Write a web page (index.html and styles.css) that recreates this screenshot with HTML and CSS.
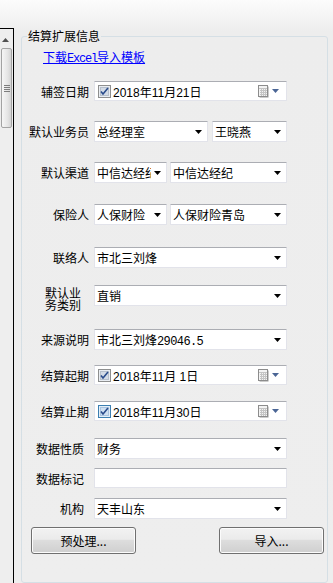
FILE: index.html
```html
<!DOCTYPE html>
<html lang="zh-CN">
<head>
  <meta charset="UTF-8" />
  <title>结算扩展信息</title>
  <link rel="stylesheet" href="styles.css">
</head>
<body>
  <div class="window">
    <aside class="side">
      <div class="side-up"><svg width="7" height="4" viewBox="0 0 7 4"><path d="M3.5 0L7 4H0z" fill="#505050"/></svg></div>
      <div class="side-thumb"><span class="grip"></span></div>
    </aside>

    <fieldset class="group">
      <legend>结算扩展信息</legend>
      <a class="tpl-link" href="#">下载<span class="ascii">Excel</span>导入模板</a>

      <div class="form">
        <label class="lbl">辅签日期</label>
        <div class="field date">
          <span class="chk"><svg width="13" height="13" viewBox="0 0 13 13"><rect x="0.5" y="0.5" width="12" height="12" fill="#e9edf2" stroke="#8e8f8f"/><rect x="2.5" y="2.5" width="8" height="8" fill="#d3dbe6" stroke="#b7c0cc"/><path d="M3 6.5l2 2.5 5-6" fill="none" stroke="#2a4c8c" stroke-width="1.6"/></svg></span>
          <span class="val">2018年11月21日</span>
          <span class="cal"><svg width="11" height="13" viewBox="0 0 11 13"><rect x="1.5" y="1.5" width="9" height="11" fill="#9a9a9a"/><rect x="0.5" y="0.5" width="9" height="11" fill="#f3f3f3" stroke="#8c8c8c"/><path d="M1 3.5h8M2 5.5h7M2 7.5h7M2 9.5h7M3.5 4v7M5.5 4v7M7.5 4v7" stroke="#c4c4c4"/></svg></span>
          <span class="cal-arrow"><svg width="7" height="4" viewBox="0 0 7 4"><path d="M0 0h7L3.5 4z" fill="#4a6595"/></svg></span>
        </div>

        <label class="lbl">默认业务员</label>
        <div class="pair pair-a">
          <div class="field combo"><span class="val">总经理室</span><span class="arrow"><svg width="7" height="4" viewBox="0 0 7 4"><path d="M0 0h7L3.5 4z" fill="#000"/></svg></span></div>
          <div class="field combo"><span class="val">王晓燕</span><span class="arrow"><svg width="7" height="4" viewBox="0 0 7 4"><path d="M0 0h7L3.5 4z" fill="#000"/></svg></span></div>
        </div>

        <label class="lbl">默认渠道</label>
        <div class="pair pair-b">
          <div class="field combo"><span class="val">中信达经纪</span><span class="arrow"><svg width="7" height="4" viewBox="0 0 7 4"><path d="M0 0h7L3.5 4z" fill="#000"/></svg></span></div>
          <div class="field combo"><span class="val">中信达经纪</span><span class="arrow"><svg width="7" height="4" viewBox="0 0 7 4"><path d="M0 0h7L3.5 4z" fill="#000"/></svg></span></div>
        </div>

        <label class="lbl">保险人</label>
        <div class="pair pair-b">
          <div class="field combo"><span class="val">人保财险</span><span class="arrow"><svg width="7" height="4" viewBox="0 0 7 4"><path d="M0 0h7L3.5 4z" fill="#000"/></svg></span></div>
          <div class="field combo"><span class="val">人保财险青岛</span><span class="arrow"><svg width="7" height="4" viewBox="0 0 7 4"><path d="M0 0h7L3.5 4z" fill="#000"/></svg></span></div>
        </div>

        <label class="lbl">联络人</label>
        <div class="field combo"><span class="val">市北三刘烽</span><span class="arrow"><svg width="7" height="4" viewBox="0 0 7 4"><path d="M0 0h7L3.5 4z" fill="#000"/></svg></span></div>

        <label class="lbl lbl-wrap"><span>默认业务类别</span></label>
        <div class="field combo"><span class="val">直销</span><span class="arrow"><svg width="7" height="4" viewBox="0 0 7 4"><path d="M0 0h7L3.5 4z" fill="#000"/></svg></span></div>

        <label class="lbl">来源说明</label>
        <div class="field combo"><span class="val">市北三刘烽<span class="mono">29046.5</span></span><span class="arrow"><svg width="7" height="4" viewBox="0 0 7 4"><path d="M0 0h7L3.5 4z" fill="#000"/></svg></span></div>

        <label class="lbl">结算起期</label>
        <div class="field date">
          <span class="chk"><svg width="13" height="13" viewBox="0 0 13 13"><rect x="0.5" y="0.5" width="12" height="12" fill="#e9edf2" stroke="#8e8f8f"/><rect x="2.5" y="2.5" width="8" height="8" fill="#d3dbe6" stroke="#b7c0cc"/><path d="M3 6.5l2 2.5 5-6" fill="none" stroke="#2a4c8c" stroke-width="1.6"/></svg></span>
          <span class="val">2018年11月&nbsp;1日</span>
          <span class="cal"><svg width="11" height="13" viewBox="0 0 11 13"><rect x="1.5" y="1.5" width="9" height="11" fill="#9a9a9a"/><rect x="0.5" y="0.5" width="9" height="11" fill="#f3f3f3" stroke="#8c8c8c"/><path d="M1 3.5h8M2 5.5h7M2 7.5h7M2 9.5h7M3.5 4v7M5.5 4v7M7.5 4v7" stroke="#c4c4c4"/></svg></span>
          <span class="cal-arrow"><svg width="7" height="4" viewBox="0 0 7 4"><path d="M0 0h7L3.5 4z" fill="#4a6595"/></svg></span>
        </div>

        <label class="lbl">结算止期</label>
        <div class="field date">
          <span class="chk"><svg width="13" height="13" viewBox="0 0 13 13"><rect x="0.5" y="0.5" width="12" height="12" fill="#e3eef8" stroke="#3c7fb1"/><rect x="2.5" y="2.5" width="8" height="8" fill="#cfe0f2" stroke="#a9c4e0"/><path d="M3 6.5l2 2.5 5-6" fill="none" stroke="#2a4c8c" stroke-width="1.6"/></svg></span>
          <span class="val">2018年11月30日</span>
          <span class="cal"><svg width="11" height="13" viewBox="0 0 11 13"><rect x="1.5" y="1.5" width="9" height="11" fill="#9a9a9a"/><rect x="0.5" y="0.5" width="9" height="11" fill="#f3f3f3" stroke="#8c8c8c"/><path d="M1 3.5h8M2 5.5h7M2 7.5h7M2 9.5h7M3.5 4v7M5.5 4v7M7.5 4v7" stroke="#c4c4c4"/></svg></span>
          <span class="cal-arrow"><svg width="7" height="4" viewBox="0 0 7 4"><path d="M0 0h7L3.5 4z" fill="#4a6595"/></svg></span>
        </div>

        <label class="lbl lbl-short">数据性质</label>
        <div class="field combo"><span class="val">财务</span><span class="arrow"><svg width="7" height="4" viewBox="0 0 7 4"><path d="M0 0h7L3.5 4z" fill="#000"/></svg></span></div>

        <label class="lbl lbl-short">数据标记</label>
        <div class="field text"></div>

        <label class="lbl lbl-short">机构</label>
        <div class="field combo"><span class="val">天丰山东</span><span class="arrow"><svg width="7" height="4" viewBox="0 0 7 4"><path d="M0 0h7L3.5 4z" fill="#000"/></svg></span></div>
      </div>

      <div class="actions">
        <button class="btn">预处理...</button>
        <button class="btn">导入...</button>
      </div>
    </fieldset>
  </div>
</body>
</html>
```

FILE: styles.css
```css
* {
  margin: 0;
  padding: 0;
  box-sizing: border-box;
}
html, body {
  height: 100%;
}
body {
  font-family: "Noto Sans CJK SC", sans-serif;
  font-size: 12px;
  color: #000;
  background: linear-gradient(#fcfcfc 0, #ededed 32px, #eeeeee 100%);
  overflow: hidden;
}
.window {
  display: flex;
  align-items: stretch;
  height: 100%;
  padding-top: 28px;
}

/* left scrollbar strip */
.side {
  width: 14px;
  flex: none;
  border-top: 1px solid #000;
  border-right: 1px solid #000;
  background: #eeeeee;
}
.side-up {
  height: 19px;
  display: flex;
  align-items: center;
  justify-content: center;
  padding-right: 2px;
  padding-top: 2px;
}
.side-thumb {
  width: 11px;
  height: 80px;
  margin-left: 1px;
  border: 1px solid #a3a3a3;
  border-radius: 2px;
  background: linear-gradient(90deg, #f6f6f6, #e6e6e6 60%, #d4d4d4);
  display: flex;
  align-items: center;
  justify-content: center;
}
.grip {
  width: 6px;
  height: 7px;
  background: repeating-linear-gradient(#7c7c7c 0 1px, transparent 1px 2px);
}

/* group box */
.group {
  flex: 1;
  margin: 0 5px 0 7px;
  border: 1px solid #d5dfe5;
  border-radius: 3px;
  padding: 0;
  min-width: 0;
}
.group legend {
  margin-left: 5px;
  padding: 0 1px;
  line-height: 16px;
}
.tpl-link {
  display: inline-block;
  margin: 5px 0 0 21px;
  line-height: 16px;
  color: #0000ff;
  text-decoration: underline;
}
.ascii {
  font-family: "Liberation Mono", monospace;
  letter-spacing: -1.2px;
}

/* form grid */
.form {
  display: grid;
  grid-template-columns: 67px 193px;
  grid-template-rows: 40px 41px 42px 43px 38px 44px 36px 36px 37px 30px 30px 21px;
  column-gap: 5px;
  align-items: start;
  margin-top: 14px;
}
.lbl {
  line-height: 21px;
  text-align: right;
  white-space: nowrap;
}
.lbl-short {
  padding-right: 5px;
}
.lbl-wrap {
  display: flex;
  justify-content: flex-end;
  padding-right: 8px;
  padding-top: 2px;
}
.lbl-wrap span {
  width: 36px;
  white-space: normal;
  text-align: left;
  line-height: 12px;
}
.field {
  height: 21px;
  background: #fff;
  border: 1px solid #e2e3ea;
  border-top-color: #abadb3;
  border-radius: 1px;
  display: flex;
  align-items: center;
  min-width: 0;
}
.field .val {
  flex: 1;
  min-width: 0;
  overflow: hidden;
  white-space: nowrap;
  padding-left: 2px;
}
.field .arrow {
  display: flex;
  margin: 1px 5px 0 3px;
}
.mono {
  font-family: "Liberation Mono", monospace;
  letter-spacing: -0.6px;
}
.date {
  height: 20px;
  padding-left: 3px;
}
.date .val {
  font-family: "Liberation Sans", "Noto Sans CJK SC", sans-serif;
  padding-left: 2px;
}
.chk, .cal, .cal-arrow {
  display: flex;
}
.cal {
  margin-right: 2px;
}
.cal-arrow {
  margin: 0 7px 0 1px;
}
.pair {
  display: flex;
}
.pair-a {
  gap: 4px;
}
.pair-a .field:first-child {
  width: 114px;
}
.pair-a .field:last-child {
  flex: 1;
}
.pair-b {
  gap: 3px;
}
.pair-b .field:first-child {
  width: 73px;
}
.pair-b .field:last-child {
  flex: 1;
}
.text {
  height: 20px;
}

/* buttons */
.actions {
  display: flex;
  justify-content: space-between;
  margin-top: 8px;
  padding: 0 3px 0 9px;
}
.btn {
  width: 105px;
  height: 27px;
  font-family: "Noto Sans CJK SC", sans-serif;
  font-size: 12px;
  color: #000;
  border: 1px solid #707070;
  border-radius: 3px;
  background: linear-gradient(#f2f2f2, #ebebeb 45%, #dddddd 50%, #cfcfcf);
  box-shadow: inset 0 0 0 1px #fcfcfc;
  cursor: pointer;
}
```
